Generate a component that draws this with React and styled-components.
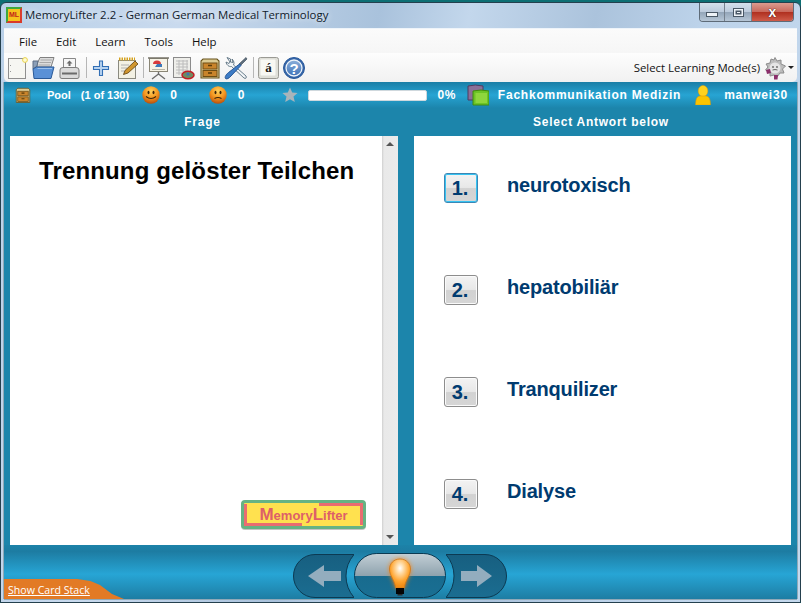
import React from 'react';
import styled, { createGlobalStyle } from 'styled-components';

const GlobalStyle = createGlobalStyle`
  html, body {
    margin: 0;
    padding: 0;
    height: 100%;
    background: #0d6f74;
    overflow: hidden;
  }
`;

const Window = styled.div`
  box-sizing: border-box;
  width: 801px;
  height: 601px;
  margin-top: 2px;
  padding: 0 3px 3px;
  display: flex;
  flex-direction: column;
  border: 1px solid #24404e;
  border-radius: 6px 6px 0 0;
  background: linear-gradient(100deg, #b9d0e8 0%, #c9daee 20%, #a9c2dc 42%, #c3d7ec 52%, #abc3dc 66%, #bdd3ea 78%, #c5d9ee 100%);
  overflow: hidden;
`;

const TitleBar = styled.div`
  flex: 0 0 25px;
  display: flex;
  align-items: flex-start;
  color: #10202c;
`;

const AppBadge = styled.div`
  box-sizing: border-box;
  width: 16px;
  height: 16px;
  margin: 4px 3px 0 2px;
  background: #f6c21c;
  border: 2px solid #3fa83c;
  border-right-color: #d93a2a;
  border-bottom-color: #d93a2a;
  color: #c2231b;
  font: bold 7px/12px "Liberation Sans", sans-serif;
  text-align: center;
`;

const TitleText = styled.span`
  margin-top: 4px;
  font: 11.4px/16px "Open Sans", sans-serif;
  text-shadow: 0 0 6px #fff;
`;

const CaptionGroup = styled.div`
  margin-left: auto;
  margin-right: 3px;
  display: flex;
  height: 18px;
  border: 1px solid #5e6b78;
  border-top: 0;
  border-radius: 0 0 4px 4px;
  overflow: hidden;
`;

const CaptionButton = styled.div`
  width: ${p => p.$width}px;
  display: flex;
  align-items: center;
  justify-content: center;
  border-right: 1px solid #75818e;
  background: ${p => p.$close
    ? 'linear-gradient(#dc9b8f 0%, #c9695c 48%, #b03020 52%, #cf5c4a 100%)'
    : 'linear-gradient(#d4e0ec 0%, #bccbdc 48%, #94a6b9 52%, #b6c6d6 100%)'};
  &:last-child { border-right: 0; }
`;

const MinGlyph = styled.i`
  display: block;
  width: 10px;
  height: 3px;
  margin-top: 5px;
  background: #eef3f8;
  border: 1px solid #4a5866;
`;

const MaxGlyph = styled.i`
  display: block;
  box-sizing: border-box;
  width: 11px;
  height: 9px;
  background: #eef3f8;
  border: 1px solid #4a5866;
  box-shadow: inset 0 0 0 1.5px #eef3f8, inset 0 0 0 3px #4a5866;
`;

const CloseGlyph = styled.span`
  font: bold 14px/14px "Liberation Sans", sans-serif;
  color: #fff;
  text-shadow: 0 0 1px #40100c, 0 0 1px #40100c;
`;

const MenuBar = styled.div`
  flex: 0 0 25px;
  display: flex;
  align-items: center;
  gap: 19px;
  padding-left: 15px;
  background: linear-gradient(#fbfbfb, #f6f6f6);
  border-top: 1px solid #eef4fa;
  box-sizing: border-box;
  font: 11.4px "Open Sans", sans-serif;
  color: #111;
`;

const ToolBar = styled.div`
  flex: 0 0 29px;
  display: flex;
  align-items: center;
  gap: 2px;
  padding-left: 1px;
  background: linear-gradient(#fdfdfd, #f1f1f1);
  border-radius: 0 0 5px 5px;
`;

const ToolIcon = styled.div`
  width: 24px;
  height: 24px;
  flex: none;
  svg { display: block; }
`;

const ToolSep = styled.div`
  width: 1px;
  height: 21px;
  flex: none;
  margin-left: ${p => p.$left || 3}px;
  background: #b6b6b6;
`;

const ModeLabel = styled.div`
  margin-left: auto;
  display: flex;
  align-items: center;
  gap: 3px;
  padding-right: 3px;
  font: 11.4px "Open Sans", sans-serif;
  color: #111;
`;

const Caret = styled.span`
  width: 0;
  height: 0;
  border: 3px solid transparent;
  border-top: 3px solid #222;
  border-bottom: 0;
  margin-left: -2px;
`;

const Content = styled.div`
  flex: 1;
  min-height: 0;
  display: flex;
  flex-direction: column;
  background: #1c85ab;
  color: #fff;
  box-shadow: 1px 0 0 #8fa9b8, -1px 0 0 #8fa9b8, 0 1px 0 #8fa9b8;
`;

const StatsBar = styled.div`
  flex: 0 0 26px;
  display: flex;
  align-items: center;
  background: linear-gradient(#1a7ea6 0%, #27a4d3 50%, #1c85ac 100%);
  font: bold 12px "Liberation Sans", sans-serif;
`;

const StatItem = styled.span`
  flex: none;
  margin-left: ${p => p.$left}px;
  font-size: ${p => p.$size || 12}px;
  letter-spacing: ${p => p.$spacing || 0}px;
  svg { display: block; }
`;

const Progress = styled.div`
  flex: none;
  box-sizing: border-box;
  width: 119px;
  height: 11px;
  margin-left: 10px;
  background: #fff;
  border: 1px solid #cfd8dd;
  border-radius: 2px;
`;

const Columns = styled.div`
  display: grid;
  grid-template-columns: 388px 377px;
  column-gap: 16px;
  padding: 0 6px;
`;

const ColumnTitle = styled.div`
  height: 28px;
  padding-right: 3px;
  text-align: center;
  font: bold 12px/29px "Liberation Sans", sans-serif;
  letter-spacing: 0.75px;
`;

const Panels = styled(Columns)`
  flex: 0 0 408px;
`;

const QuestionPane = styled.div`
  display: flex;
  min-height: 0;
`;

const QuestionBody = styled.div`
  flex: 1;
  box-sizing: border-box;
  display: flex;
  flex-direction: column;
  justify-content: space-between;
  background: #fff;
  padding: 20px 16px 16px 29px;
`;

const Question = styled.h1`
  margin: 0;
  font: bold 24px/30px "Liberation Sans", sans-serif;
  letter-spacing: 0.14px;
  color: #000;
  white-space: nowrap;
`;

const Logo = styled.div`
  align-self: flex-end;
  box-sizing: border-box;
  width: 125px;
  height: 29px;
  border: 3px solid #66b383;
  border-radius: 4px;
  background: #ffe14f;
  box-shadow: 0 1px 0 #c4c4c4;
  position: relative;
  text-align: center;
  color: #dd5f69;
  font: bold 13px/23px "Liberation Sans", sans-serif;
  &::before {
    content: "";
    position: absolute;
    box-sizing: border-box;
    top: 0;
    right: 0;
    width: 44px;
    height: 22px;
    border-top: 3px solid #ea6c70;
    border-right: 3px solid #ea6c70;
  }
  &::after {
    content: "";
    position: absolute;
    box-sizing: border-box;
    bottom: 0;
    left: 0;
    width: 58px;
    height: 22px;
    border-bottom: 3px solid #ea6c70;
    border-left: 3px solid #ea6c70;
  }
`;

const LogoCap = styled.span`
  font-size: 17px;
`;

const ScrollBar = styled.div`
  flex: 0 0 16px;
  display: flex;
  flex-direction: column;
  justify-content: space-between;
  align-items: center;
  padding: 6px 0;
  box-sizing: border-box;
  background: linear-gradient(90deg, #cfcfcf 0, #e9e9e9 2px, #ebebeb 100%);
`;

const ScrollArrow = styled.span`
  width: 0;
  height: 0;
  border: 4px solid transparent;
  ${p => (p.$down ? 'border-top: 4px solid #555; border-bottom: 0;' : 'border-bottom: 4px solid #555; border-top: 0;')}
`;

const AnswerPane = styled.div`
  background: #fff;
  padding: 1px 0 0 30px;
  display: grid;
  grid-template-rows: repeat(4, 102px);
`;

const AnswerRow = styled.div`
  display: flex;
  align-items: center;
  gap: 29px;
`;

const AnswerKey = styled.button`
  box-sizing: border-box;
  width: 34px;
  height: 30px;
  padding: 0 2px 0 0;
  border: 1px solid ${p => (p.$active ? '#3b87b5' : '#8d8d8d')};
  border-radius: 3px;
  background: linear-gradient(#f3f3f3 0%, #e8e8e8 48%, #d2d2d2 52%, #d6d6d6 100%);
  box-shadow: ${p => (p.$active ? 'inset 0 0 0 1px #36c3f2' : 'inset 0 0 0 1px #fafafa')};
  color: #003b70;
  font: bold 20px/28px "Liberation Sans", sans-serif;
`;

const AnswerText = styled.span`
  font: bold 20px "Liberation Sans", sans-serif;
  letter-spacing: -0.17px;
  color: #003b70;
  margin-top: -6px;
`;

const BottomBar = styled.div`
  flex: 1;
  display: grid;
  grid-template-columns: 1fr auto 1fr;
  background: linear-gradient(#1c82a8 0%, #1d7ca2 12%, #27a5d5 54%, #1d7da3 100%);
`;

const CardStackTab = styled.div`
  align-self: end;
  justify-self: start;
  box-sizing: border-box;
  width: 120px;
  height: 20px;
  padding: 5px 0 0 4px;
  background: #e27a25;
  clip-path: polygon(0 0, 61% 0, 72% 10%, 80% 30%, 90% 75%, 100% 100%, 0 100%);
  font: 10.6px/13px "Open Sans", sans-serif;
  color: #fff;
  text-decoration: underline;
`;

const NavGroup = styled.div`
  display: flex;
  align-items: flex-start;
  padding-top: 8px;
  margin-left: -1px;
  grid-column: 2;
  svg { display: block; }
`;

const Pod = styled.div`
  padding-top: 1px;
`;

const LampButton = styled.div`
  box-sizing: border-box;
  width: 92px;
  height: 45px;
  border: 1px solid #0c3a52;
  border-radius: 23px;
  background: linear-gradient(#c2ced5 0%, #8fa3ae 50%, #186b8e 50%, #1a6f93 100%);
  display: flex;
  justify-content: center;
  align-items: center;
`;

const NewPageIcon = () => (
  <svg width="24" height="24" viewBox="0 0 24 24">
    <rect x="3.5" y="2.5" width="17" height="20" fill="#f6f6f2" stroke="#8f8f8f" />
    <path d="M5.5 9 V10 M5.5 15 V16" stroke="#999" />
    <circle cx="20" cy="4" r="2.4" fill="#fffbd0" stroke="#e8d24c" />
  </svg>
);

const OpenIcon = () => (
  <svg width="24" height="24" viewBox="0 0 24 24">
    <path d="M6 8 L9 1.5 H23 L20 11 H6Z" fill="#dcdcdc" stroke="#808080" />
    <path d="M9.5 4 H21 M8.5 6.5 H20 M7.5 9 H19" stroke="#a8a8a8" />
    <path d="M2 5 H7 L6 10 L2 13Z" fill="#8b9fb8" stroke="#5c6d84" />
    <path d="M5.5 11 H23 L20 22.5 H3 L2 13Z" fill="#5b91d6" stroke="#2b5a98" />
    <path d="M6.5 12.5 H21" stroke="#9cc1ec" />
  </svg>
);

const PrintIcon = () => (
  <svg width="24" height="24" viewBox="0 0 24 24">
    <path d="M6.5 2.5 H18.5 V13 H6.5Z" fill="#f6f6f6" stroke="#888" />
    <path d="M12.5 4.5 L9.5 7.5 H11.5 V10 H13.5 V7.5 H15.5Z" fill="#6a6a6a" />
    <path d="M3 14 Q3 11.5 6 11.5 H19 Q22 11.5 22 14 V21 Q22 22.5 20 22.5 H5 Q3 22.5 3 21Z" fill="#dadada" stroke="#7d7d7d" />
    <path d="M5 17.5 H20" stroke="#6b6b6b" strokeWidth="2" />
  </svg>
);

const PlusIcon = () => (
  <svg width="24" height="24" viewBox="0 0 24 24">
    <path d="M10.5 5 H13.5 V10.5 H19.5 V13.5 H13.5 V19.5 H10.5 V13.5 H4.5 V10.5 H10.5Z" fill="#b8d3f0" stroke="#336fb5" strokeWidth="1.1" />
  </svg>
);

const NoteIcon = () => (
  <svg width="24" height="24" viewBox="0 0 24 24">
    <rect x="3.5" y="4.5" width="17" height="18" fill="#f3f1e4" stroke="#8a8a80" />
    <path d="M4 3 H20" stroke="#d5a21e" strokeWidth="3" strokeDasharray="1.5 1" />
    <path d="M6 9 H14 M6 12 H12 M6 15 H10" stroke="#b2b2b2" />
    <path d="M8.5 18.5 L10 14.5 L20 5 L23 8 L13 17Z" fill="#d0962e" stroke="#5c3e10" strokeWidth="0.8" />
  </svg>
);

const PresentIcon = () => (
  <svg width="24" height="24" viewBox="0 0 24 24">
    <rect x="3.5" y="2.5" width="18" height="13" fill="#f6f3e6" stroke="#8a8676" />
    <path d="M2 2 H23" stroke="#77746a" strokeWidth="1.5" />
    <path d="M7 8 A4 3.5 0 0 1 15 8Z" fill="#d83a3a" />
    <path d="M11 8 H16 V11 H9Z" fill="#3d79b8" />
    <path d="M6 13.5 H19" stroke="#b9b6a6" />
    <path d="M12.5 16 V19 M12.5 18 L6 23 M12.5 18 L19 23" stroke="#6c6c6c" strokeWidth="1.4" fill="none" />
  </svg>
);

const TableIcon = () => (
  <svg width="24" height="24" viewBox="0 0 24 24">
    <rect x="1.5" y="1.5" width="17" height="20" fill="#eeeeea" stroke="#8b8b8b" />
    <path d="M4 5 H16 M4 8 H16 M4 11 H16 M4 14 H16 M4 17 H10 M7 4 V19 M11 4 V16 M15 4 V13" stroke="#bcbcbc" />
    <ellipse cx="16" cy="19" rx="6" ry="3.8" fill="#6f8a62" stroke="#c21d24" strokeWidth="1.5" />
    <circle cx="16" cy="18" r="1.5" fill="#3e74b5" />
  </svg>
);

const DrawerIcon = ({ size = 24 }) => (
  <svg width={size} height={size} viewBox="0 0 24 24">
    <path d="M5 3 H19 L21 5 V22 H3 V5Z" fill="#dccb93" stroke="#67531d" strokeWidth="1.1" />
    <rect x="5" y="7" width="14" height="6" fill="#c9842b" stroke="#6e4d14" />
    <rect x="5" y="14.5" width="14" height="6" fill="#c9842b" stroke="#6e4d14" />
    <path d="M10 9.5 H14 M10 17 H14" stroke="#5a3b0a" strokeWidth="1.4" />
  </svg>
);

const ToolsIcon = () => (
  <svg width="24" height="24" viewBox="0 0 24 24">
    <path d="M3 1.5 L6.5 3 V6 L9 6.5 L8 3 C10 5 10.5 7 9.5 9 L22 20 C23 22 21.5 23 20 22 L7.5 10.5 C5 11 2.5 9 2 6 L5 7.5 L6 6Z" fill="#f2f5f7" stroke="#5a7080" strokeWidth="0.9" />
    <path d="M22 1.5 L23 3 L16.5 9.5 L15 8Z" fill="#5f6f7e" stroke="#34424f" strokeWidth="0.6" />
    <path d="M15.5 8 L17 9.5 L7 20 C5 22.5 2.5 23.5 1.5 22.5 C.5 21 2 18.5 4.5 16.5Z" fill="#3e7cc5" stroke="#1f4f8f" strokeWidth="0.9" />
  </svg>
);

const KeyIcon = () => (
  <svg width="24" height="24" viewBox="0 0 24 24">
    <rect x="2.5" y="1.5" width="20" height="21" rx="2" fill="#dfdfd8" stroke="#9a9a94" />
    <rect x="4.5" y="3.5" width="15" height="16" rx="1" fill="#f8f8f3" />
    <text x="12.5" y="16" textAnchor="middle" fontFamily="Liberation Serif, serif" fontWeight="bold" fontSize="13" fill="#1a1a1a">á</text>
  </svg>
);

const HelpIcon = () => (
  <svg width="24" height="24" viewBox="0 0 24 24">
    <defs>
      <linearGradient id="helpFill" x1="0" y1="0" x2="0" y2="1">
        <stop offset="0" stopColor="#8db0da" />
        <stop offset="1" stopColor="#3e72b8" />
      </linearGradient>
    </defs>
    <circle cx="12" cy="12" r="10.5" fill="#3565a8" stroke="#2a5a9c" />
    <circle cx="12" cy="12" r="8" fill="url(#helpFill)" stroke="#eef3f9" strokeWidth="1.3" />
    <text x="12" y="17.5" textAnchor="middle" fontFamily="Liberation Sans, sans-serif" fontWeight="bold" fontSize="15" fill="#fff">?</text>
  </svg>
);

const GearIcon = () => (
  <svg width="24" height="24" viewBox="0 0 24 24">
    <path d="M12 1.5 L14 5 L18 4 L18 8 L22.5 10 L19.5 13 L21 17 L17 17 L14 21 L11 19 L7 20 L7 16 L2.5 14 L5 11 L3 8 L7 7 L8 3 L11 4Z" fill="#bdbdbd" stroke="#8c8c8c" />
    <circle cx="12" cy="12" r="5.5" fill="#e5e5e5" />
    <circle cx="10" cy="11" r="0.9" fill="#666" />
    <circle cx="14" cy="11" r="0.9" fill="#666" />
    <path d="M9.5 14 Q12 13 14.5 14" stroke="#666" fill="none" />
    <path d="M3 14 L7 13 L8 17 L4 18Z M11 19 L15 19 L14.5 23.5 L11 23.5Z" fill="#8b2f6b" />
  </svg>
);

const Smiley = ({ sad }) => (
  <svg width="18" height="18" viewBox="0 0 18 18">
    <defs>
      <radialGradient id={sad ? 'sadFace' : 'happyFace'} cx="50%" cy="28%" r="72%">
        <stop offset="0" stopColor="#ffd25c" />
        <stop offset="0.55" stopColor="#f4951f" />
        <stop offset="1" stopColor="#b8500c" />
      </radialGradient>
    </defs>
    <circle cx="9" cy="9" r="8.7" fill={`url(#${sad ? 'sadFace' : 'happyFace'})`} />
    <ellipse cx="6.5" cy="6.5" rx="1" ry="1.8" fill="#3a2308" />
    <ellipse cx="11.5" cy="6.5" rx="1" ry="1.8" fill="#3a2308" />
    <path d={sad ? 'M5.5 12.5 Q9 10.5 12.5 12.5' : 'M4 10.5 Q9 14.5 14 10.5'} stroke="#3a2308" strokeWidth="1.1" fill="none" />
  </svg>
);

const StarIcon = () => (
  <svg width="16" height="16" viewBox="0 0 16 16">
    <path d="M8 .5 L10.2 5.6 L15.6 6 L11.5 9.6 L12.8 15 L8 12.2 L3.2 15 L4.5 9.6 L.4 6 L5.8 5.6Z" fill="#a9b4ba" />
  </svg>
);

const BooksIcon = () => (
  <svg width="22" height="22" viewBox="0 0 22 22">
    <path d="M1 2 Q8 0 16 2 V16 H1Z" fill="#8a6f97" stroke="#4f3a60" />
    <path d="M6 7 Q14 5 22 7 V21 H6Z" fill="#6cc425" stroke="#3f8a0e" />
    <path d="M8.5 9 H20 V19 H8.5Z" fill="#8ed63c" />
  </svg>
);

const UserIcon = () => (
  <svg width="16" height="20" viewBox="0 0 16 20">
    <ellipse cx="8" cy="6" rx="4.8" ry="5.5" fill="#ffd21e" stroke="#e8a200" strokeWidth="0.5" />
    <path d="M.5 20 Q.5 11 5 11 H11 Q15.5 11 15.5 20Z" fill="#fbc400" stroke="#e09a00" strokeWidth="0.5" />
  </svg>
);

const LeftPod = () => (
  <svg width="61" height="44" viewBox="0 0 61 44">
    <defs>
      <linearGradient id="podFill" x1="0" y1="0" x2="0" y2="1">
        <stop offset="0" stopColor="#175f80" />
        <stop offset="1" stopColor="#1b6d91" />
      </linearGradient>
    </defs>
    <path d="M22 .5 H61 Q53 10 53 22 Q53 34 61 43.5 H22 A21.5 21.5 0 0 1 22 .5Z" fill="url(#podFill)" stroke="#0c3a52" />
    <path d="M15 22 L31 11 V17 H48 V27 H31 V33Z" fill="#93adbe" />
  </svg>
);

const RightPod = () => (
  <svg width="61" height="44" viewBox="0 0 61 44">
    <path d="M39 .5 H0 Q8 10 8 22 Q8 34 0 43.5 H39 A21.5 21.5 0 0 0 39 .5Z" fill="url(#podFill)" stroke="#0c3a52" />
    <path d="M46 22 L31 11 V17 H15 V27 H31 V33Z" fill="#93adbe" />
  </svg>
);

const BulbIcon = () => (
  <svg width="36" height="43" viewBox="0 0 36 43">
    <defs>
      <filter id="bulbBlur" x="-40%" y="-40%" width="180%" height="180%">
        <feGaussianBlur stdDeviation="2.4" />
      </filter>
      <radialGradient id="bulbFill" cx="50%" cy="32%" r="62%">
        <stop offset="0" stopColor="#ffffff" />
        <stop offset="0.28" stopColor="#ffdca8" />
        <stop offset="0.72" stopColor="#ffa42e" />
        <stop offset="1" stopColor="#f28c14" />
      </radialGradient>
    </defs>
    <path d="M18 5 C11.5 5 7.5 10 7.5 15 C7.5 22 13 26 13.5 34 H22.5 C23 26 28.5 22 28.5 15 C28.5 10 24.5 5 18 5Z" fill="#ff8412" filter="url(#bulbBlur)" />
    <path d="M18 5 C11.5 5 7.5 10 7.5 15 C7.5 22 13 26 13.5 34 H22.5 C23 26 28.5 22 28.5 15 C28.5 10 24.5 5 18 5Z" fill="url(#bulbFill)" stroke="#c9781c" strokeWidth="0.8" />
    <rect x="14" y="34" width="8" height="6" fill="#050505" />
    <rect x="15.5" y="40" width="5" height="1.5" fill="#2a2a2a" />
  </svg>
);

const menus = ['File', 'Edit', 'Learn', 'Tools', 'Help'];
const answers = ['neurotoxisch', 'hepatobiliär', 'Tranquilizer', 'Dialyse'];

const App = () => (
  <>
    <GlobalStyle />
    <Window>
      <TitleBar>
        <AppBadge>ML</AppBadge>
        <TitleText>MemoryLifter 2.2 - German German Medical Terminology</TitleText>
        <CaptionGroup>
          <CaptionButton $width={24}><MinGlyph /></CaptionButton>
          <CaptionButton $width={26}><MaxGlyph /></CaptionButton>
          <CaptionButton $width={41} $close><CloseGlyph>x</CloseGlyph></CaptionButton>
        </CaptionGroup>
      </TitleBar>

      <MenuBar>
        {menus.map(m => <span key={m}>{m}</span>)}
      </MenuBar>

      <ToolBar>
        <ToolIcon><NewPageIcon /></ToolIcon>
        <ToolIcon><OpenIcon /></ToolIcon>
        <ToolIcon><PrintIcon /></ToolIcon>
        <ToolSep />
        <ToolIcon><PlusIcon /></ToolIcon>
        <ToolIcon><NoteIcon /></ToolIcon>
        <ToolSep $left={2} />
        <ToolIcon><PresentIcon /></ToolIcon>
        <ToolIcon><TableIcon /></ToolIcon>
        <ToolIcon><DrawerIcon /></ToolIcon>
        <ToolIcon><ToolsIcon /></ToolIcon>
        <ToolSep $left={3} />
        <ToolIcon><KeyIcon /></ToolIcon>
        <ToolIcon><HelpIcon /></ToolIcon>
        <ModeLabel>
          Select Learning Mode(s)
          <GearIcon />
          <Caret />
        </ModeLabel>
      </ToolBar>

      <Content>
        <StatsBar>
          <StatItem $left={10}><DrawerIcon size={18} /></StatItem>
          <StatItem $left={15} $size={11}>Pool</StatItem>
          <StatItem $left={10} $size={11}>(1 of 130)</StatItem>
          <StatItem $left={13}><Smiley /></StatItem>
          <StatItem $left={10}>0</StatItem>
          <StatItem $left={32}><Smiley sad /></StatItem>
          <StatItem $left={11}>0</StatItem>
          <StatItem $left={37}><StarIcon /></StatItem>
          <Progress />
          <StatItem $left={11} $spacing={0.5}>0%</StatItem>
          <StatItem $left={11}><BooksIcon /></StatItem>
          <StatItem $left={9} $spacing={0.77}>Fachkommunikation Medizin</StatItem>
          <StatItem $left={14}><UserIcon /></StatItem>
          <StatItem $left={13} $spacing={0.8}>manwei30</StatItem>
        </StatsBar>

        <Columns>
          <ColumnTitle>Frage</ColumnTitle>
          <ColumnTitle>Select Antwort below</ColumnTitle>
        </Columns>

        <Panels>
          <QuestionPane>
            <QuestionBody>
              <Question>Trennung gelöster Teilchen</Question>
              <Logo>
                <LogoCap>M</LogoCap>emory<LogoCap>L</LogoCap>ifter
              </Logo>
            </QuestionBody>
            <ScrollBar>
              <ScrollArrow />
              <ScrollArrow $down />
            </ScrollBar>
          </QuestionPane>
          <AnswerPane>
            {answers.map((a, i) => (
              <AnswerRow key={a}>
                <AnswerKey $active={i === 0}>{i + 1}.</AnswerKey>
                <AnswerText>{a}</AnswerText>
              </AnswerRow>
            ))}
          </AnswerPane>
        </Panels>

        <BottomBar>
          <CardStackTab>Show Card Stack</CardStackTab>
          <NavGroup>
            <Pod><LeftPod /></Pod>
            <LampButton><BulbIcon /></LampButton>
            <Pod><RightPod /></Pod>
          </NavGroup>
        </BottomBar>
      </Content>
    </Window>
  </>
);

export default App;
